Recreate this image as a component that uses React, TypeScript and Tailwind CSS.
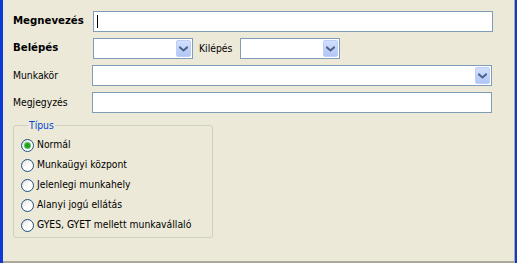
import React from 'react'

const font = { fontFamily: '"DejaVu Sans Condensed", "DejaVu Sans", Tahoma, sans-serif' }

function Arrow() {
  return (
    <svg width="9" height="6" viewBox="0 0 9 6" className="block">
      <path d="M1 1.5 L4.5 4.5 L8 1.5" fill="none" stroke="#4d6185" strokeWidth="2" strokeLinecap="square" />
    </svg>
  )
}

function Combo({ className }: { className: string }) {
  return (
    <div className={`flex h-[21px] items-stretch justify-end border border-[#7f9db9] bg-white p-[1px] ${className}`}>
      <div className="flex w-[15px] items-center justify-center rounded-[2px] border border-[#bccefa] bg-gradient-to-b from-[#d2e0fd] to-[#b1c6f6]">
        <Arrow />
      </div>
    </div>
  )
}

function Radio({ label, checked }: { label: string; checked?: boolean }) {
  return (
    <div className="flex h-[20px] items-center">
      <div className="flex h-[13px] w-[13px] items-center justify-center rounded-full border border-[#1c5180] bg-gradient-to-br from-[#dcdbd3] via-white to-white">
        {checked && <div className="h-[5px] w-[5px] rounded-full bg-[#21a121] ring-1 ring-[#5ec15e]" />}
      </div>
      <span className="ml-[3px] text-[10.3px] text-black">{label}</span>
    </div>
  )
}

export default function App() {
  return (
    <div className="flex h-[263px] w-[517px] bg-[#ece9d8]" style={font}>
      <div className="w-[3px] bg-[#0b3ad6]" />
      <div className="flex flex-1 flex-col border-b-2 border-r border-[#aca899] pl-[10px] pt-[11px]">
        <div className="flex h-[21px] items-center">
          <span className="w-[80px] text-[11.3px] font-bold">Megnevezés</span>
          <div className="flex h-[21px] w-[400px] items-center border border-[#7f9db9] bg-white pl-[3px]">
            <div className="h-[13px] w-px bg-black" />
          </div>
        </div>
        <div className="mt-[6px] flex h-[21px] items-center">
          <span className="w-[80px] text-[11.3px] font-bold">Belépés</span>
          <Combo className="w-[100px]" />
          <span className="ml-[6px] w-[41px] text-[10.3px]">Kilépés</span>
          <Combo className="w-[100px]" />
        </div>
        <div className="mt-[6px] flex h-[21px] items-center">
          <span className="w-[79px] text-[10.3px]">Munkakör</span>
          <Combo className="w-[400px]" />
        </div>
        <div className="mt-[6px] flex h-[21px] items-center">
          <span className="w-[79px] text-[10.3px]">Megjegyzés</span>
          <div className="h-[21px] w-[400px] border border-[#7f9db9] bg-white" />
        </div>
        <fieldset className="mt-[6px] h-[119px] w-[200px] rounded-[3px] border border-[#d0d0bf] pl-[7px] pt-[3px]">
          <legend className="ml-[7px] px-[1px] text-[10.3px] leading-[13px] text-[#0046d5]">Típus</legend>
          <Radio label="Normál" checked />
          <Radio label="Munkaügyi központ" />
          <Radio label="Jelenlegi munkahely" />
          <Radio label="Alanyi jogú ellátás" />
          <Radio label="GYES, GYET mellett munkavállaló" />
        </fieldset>
      </div>
      <div className="w-[2px] bg-[#0b3ad6]" />
    </div>
  )
}
